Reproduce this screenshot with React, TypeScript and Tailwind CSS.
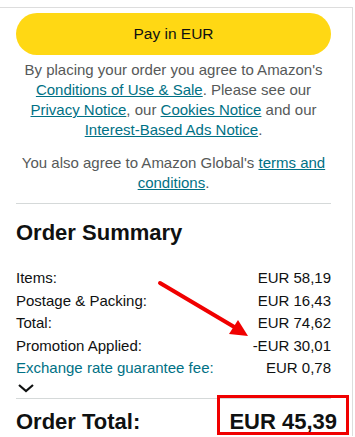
export default function App() {
  const rows = [
    { label: "Items:", value: "EUR 58,19" },
    { label: "Postage & Packing:", value: "EUR 16,43" },
    { label: "Total:", value: "EUR 74,62" },
    { label: "Promotion Applied:", value: "-EUR 30,01" },
  ];

  return (
    <div className="relative w-[355px] h-[437px] overflow-hidden bg-white font-['Liberation_Sans',Arial,sans-serif] text-[#0F1111]">
      <div className="mt-[7px] w-[353px] border-t border-r border-[#dddddd] pl-4 pr-[21px] pt-[5px]">
        {/* Pay button */}
        <button className="w-full h-[42px] rounded-full bg-[#FFD814] text-[15.5px] text-[#0F1111]">
          Pay in EUR
        </button>

        {/* Legal text */}
        <p className="mt-[5px] -mx-2 text-center text-[15px] leading-[20px] text-[#565959] whitespace-nowrap">
          By placing your order you agree to Amazon's
          <br />
          <a className="text-[#007185] underline">Conditions of Use &amp; Sale</a>. Please see our
          <br />
          <a className="text-[#007185] underline">Privacy Notice</a>, our{" "}
          <a className="text-[#007185] underline">Cookies Notice</a> and our
          <br />
          <a className="text-[#007185] underline">Interest-Based Ads Notice</a>.
        </p>
        <p className="mt-[13px] text-center text-[15px] leading-[20px] text-[#565959] whitespace-nowrap">
          You also agree to Amazon Global's{" "}
          <a className="text-[#007185] underline">terms and</a>
          <br />
          <a className="text-[#007185] underline">conditions</a>.
        </p>

        <div className="mt-[10px] border-t border-[#d5d9d9]" />

        {/* Order summary */}
        <h2 className="mt-[15px] text-[22px] leading-[28px] font-bold">Order Summary</h2>

        <div className="mt-[20px] text-[15px] leading-[22.5px]">
          {rows.map((r) => (
            <div key={r.label} className="flex justify-between">
              <span>{r.label}</span>
              <span>{r.value}</span>
            </div>
          ))}
          <div className="flex justify-between">
            <span className="text-[#007185]">Exchange rate guarantee fee:</span>
            <span>EUR 0,78</span>
          </div>
        </div>

        <svg width="20" height="12" viewBox="0 0 20 12" className="mt-[2px]">
          <path d="M3 3l7 6 7-6" fill="none" stroke="#0F1111" strokeWidth="2.2" />
        </svg>

        <div className="mt-[4px] border-t border-[#d5d9d9]" />

        <div className="mt-[9px] flex justify-between text-[22px] leading-[28px] font-bold">
          <span>Order Total:</span>
          <span className="-mr-[6px]">EUR 45,39</span>
        </div>
      </div>

      {/* Annotations */}
      <div className="absolute left-[217px] top-[395px] w-[132px] h-[40px] border-[3px] border-[#f00000]" />
      <svg className="absolute left-0 top-0" width="355" height="437">
        <line x1="160" y1="283" x2="236" y2="328" stroke="#f00000" strokeWidth="4" strokeLinecap="round" />
        <polygon points="248,336 229,334 238,320" fill="#f00000" />
      </svg>
    </div>
  );
}
